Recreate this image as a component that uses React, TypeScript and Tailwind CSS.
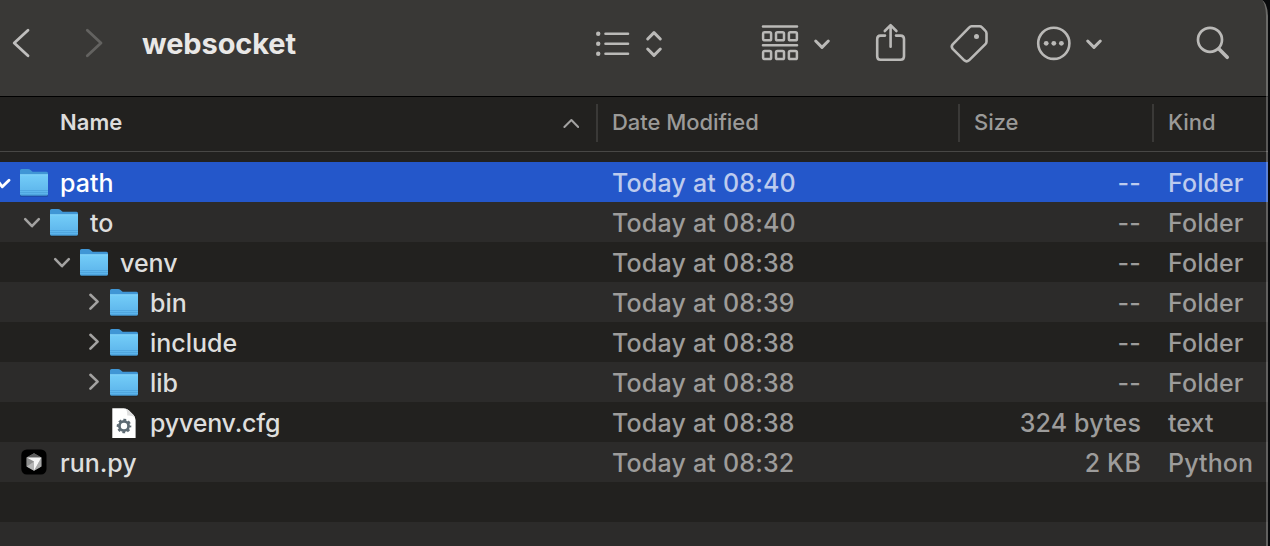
import React from "react";

type Row = { name: string; level: number; icon: "folder" | "cfg" | "py"; toggle?: "open" | "closed" | "check"; date: string; size: string; kind: string };

const rows: Row[] = [
  { name: "path", level: 0, icon: "folder", toggle: "check", date: "Today at 08:40", size: "--", kind: "Folder" },
  { name: "to", level: 1, icon: "folder", toggle: "open", date: "Today at 08:40", size: "--", kind: "Folder" },
  { name: "venv", level: 2, icon: "folder", toggle: "open", date: "Today at 08:38", size: "--", kind: "Folder" },
  { name: "bin", level: 3, icon: "folder", toggle: "closed", date: "Today at 08:39", size: "--", kind: "Folder" },
  { name: "include", level: 3, icon: "folder", toggle: "closed", date: "Today at 08:38", size: "--", kind: "Folder" },
  { name: "lib", level: 3, icon: "folder", toggle: "closed", date: "Today at 08:38", size: "--", kind: "Folder" },
  { name: "pyvenv.cfg", level: 3, icon: "cfg", date: "Today at 08:38", size: "324 bytes", kind: "text" },
  { name: "run.py", level: 0, icon: "py", date: "Today at 08:32", size: "2 KB", kind: "Python" },
];

const indents = ["w-0", "w-[30px]", "w-[60px]", "w-[90px]"];

function Toolbar() {
  return (
    <header className="flex h-24 shrink-0 items-start bg-[#393836]">
      <svg className="h-24 w-[120px] shrink-0" viewBox="0 0 120 96" fill="none" strokeWidth="2.8" strokeLinecap="round" strokeLinejoin="round">
        <path d="M28 30.2 14.2 43 28 55.8" stroke="#bfbebd" />
        <path d="M87.3 30.2 101 43 87.3 55.8" stroke="#636260" />
      </svg>
      <h1 className="w-[460px] shrink-0 pt-[24px] pl-[22px] text-[29px] leading-10 font-bold tracking-[-0.1px] text-[#e9e8e7]">websocket</h1>
      <svg className="h-24 w-[690px] shrink-0" viewBox="580 0 690 96" fill="none" stroke="#bab9b7" strokeWidth="2.6" strokeLinecap="round" strokeLinejoin="round">
        <path d="M605.5 33.8H628M605.5 43.8H628M605.5 53.8H628" strokeWidth="2.6" />
        <g fill="#bab9b7" stroke="none">
          <circle cx="598.2" cy="33.8" r="2.2" /><circle cx="598.2" cy="43.8" r="2.2" /><circle cx="598.2" cy="53.8" r="2.2" />
          <circle cx="976.5" cy="36.6" r="2.5" />
          <circle cx="1046.2" cy="43.3" r="2.4" /><circle cx="1053.8" cy="43.3" r="2.4" /><circle cx="1061.4" cy="43.3" r="2.4" />
        </g>
        <path d="M647.7 39 654 32.6 660.3 39M647.7 49 654 55.4 660.3 49" strokeWidth="3" />
        <path d="M763 26.5H797M763 45.3H797" strokeWidth="2.6" />
        <g strokeWidth="2.5">
          <rect x="763.1" y="32.3" width="8" height="8" rx="1.4" /><rect x="776" y="32.3" width="8" height="8" rx="1.4" /><rect x="788.9" y="32.3" width="8" height="8" rx="1.4" />
          <rect x="763.1" y="51.1" width="8" height="8" rx="1.4" /><rect x="776" y="51.1" width="8" height="8" rx="1.4" /><rect x="788.9" y="51.1" width="8" height="8" rx="1.4" />
        </g>
        <path d="M815.7 41 822 47.4 828.3 41" strokeWidth="3" />
        <path d="M885 35.6H880.5Q877.2 35.6 877.2 39V56.2Q877.2 59.8 880.5 59.8H900.5Q904 59.8 904 56.2V39Q904 35.6 900.5 35.6H896M890.6 46.8V25.6M884.8 31 890.6 25.2 896.4 31" strokeWidth="2.6" />
        <path d="M971.5 26.3H979.5Q981 26.3 982 27.3L985.2 30.6Q986.5 31.8 986.5 33.4V41.5Q986.5 43 985.4 44.1L969 60.3Q966.6 62.3 964.3 60.3L952.7 48.8Q950.8 46.5 952.7 44.3L969.3 27.4Q970.3 26.3 971.5 26.3Z" strokeWidth="2.6" />
        <circle cx="1053.8" cy="43.3" r="15.6" />
        <path d="M1087.7 41 1094 47.4 1100.3 41" strokeWidth="3" />
        <circle cx="1210" cy="39.8" r="12" strokeWidth="2.7" />
        <path d="M1219 49 1227.2 57.2" strokeWidth="3.7" />
      </svg>
    </header>
  );
}

function Toggle({ kind }: { kind?: Row["toggle"] }) {
  return (
    <svg className="h-10 w-[19px] shrink-0 overflow-visible" viewBox="0 0 19 40" fill="none" stroke="#a3a2a1" strokeWidth="2.6" strokeLinecap="round" strokeLinejoin="round">
      {kind === "check" && <path d="M-3 18 2.3 24.8 9 18.3" stroke="#fff" strokeWidth="2.8" />}
      {kind === "open" && <path d="M-4.8 17.2 2 24.2 8.8 17.2" />}
      {kind === "closed" && <path d="M0.4 12.8 7.6 19.6 0.4 26.6" />}
    </svg>
  );
}

function FileIcon({ kind }: { kind: Row["icon"] }) {
  return (
    <svg className="h-10 w-[30px] shrink-0" viewBox="0 0 30 40">
      {kind === "folder" && (
        <>
          <defs>
            <linearGradient id="front" x1="0" y1="0" x2="0" y2="1">
              <stop offset="0" stopColor="#74cdf8" />
              <stop offset="1" stopColor="#5ab2ea" />
            </linearGradient>
          </defs>
          <rect x="1" y="33" width="28" height="1.6" rx="0.8" fill="#000" opacity="0.3" />
          <path d="M1 8.5Q1 7 2.5 7H9Q10.5 7 11.5 8L13 9.3Q13.6 9.8 14.6 9.8H27.5Q29 9.8 29 11.3V31H1Z" fill="#4096d5" />
          <path d="M1 12.5H29V32Q29 33.4 27.6 33.4H2.4Q1 33.4 1 32Z" fill="url(#front)" />
          <path d="M1 12.8H29" stroke="#8ad8fb" strokeWidth="0.8" />
          <path d="M1 28.5H29M1 30.5H29" stroke="#4b9fda" strokeWidth="0.7" />
          <path d="M1.4 33H28.6" stroke="#3f94d0" strokeWidth="0.9" />
        </>
      )}
      {kind === "cfg" && (
        <>
          <path d="M3.3 6.3H15Q18 6.6 20 8.6L24.5 13Q26.6 15.2 26.6 18V36H3.3Z" fill="#fff" />
          <path d="M16 6.5Q18.6 8 18.2 13.5Q23.8 13.2 26 15.6Q25.4 14 24.5 13L20 8.6Q18.2 6.9 16 6.5Z" fill="#dedede" />
          <g transform="translate(15 24)" fill="none" stroke="#5d6a73">
            <circle r="4.6" strokeWidth="2.8" />
            <circle r="6.3" strokeWidth="2" strokeDasharray="2.8 2.148" strokeDashoffset="1.4" />
          </g>
        </>
      )}
      {kind === "py" && (
        <>
          <rect x="2.3" y="7.4" width="25.2" height="25.2" rx="5.5" fill="#000" />
          <path d="M15 11.2 22.4 15.4V24.4L15 28.8 7.6 24.4V15.4Z" fill="#777" />
          <path d="M15 11.2 22.4 15.4H7.6Z" fill="#5c5c5c" />
          <path d="M7.6 15.4 15 19.6 7.6 24.4Z" fill="#8e8e8e" />
          <path d="M7.6 24.4 15 19.6V28.8Z" fill="#b5b5b5" />
          <path d="M22.4 24.4V15.4L15 28.8Z" fill="#a8a8a8" />
          <path d="M7.6 15.4H22.4L15 28.8V19.6Z" fill="#f4f4f4" />
        </>
      )}
    </svg>
  );
}

export default function App() {
  return (
    <main className="h-[546px] w-[1270px] overflow-hidden bg-[#08090b] font-['Inter',sans-serif]">
      <div className="relative flex h-full w-[1268px] flex-col overflow-hidden rounded-tr-[7px_16px] bg-[#22211f]">
        <Toolbar />
        <div className="flex h-14 shrink-0 items-start border-t border-b border-t-black border-b-[#484745] pt-[7px] text-[22px] leading-9 font-medium tracking-[-0.05px] text-[#9b9a98]">
          <div className="flex h-[38px] w-[598px] shrink-0 items-start justify-between border-r-2 border-[#3a3937] pr-[17px] pl-[60px]">
            <span className="font-semibold tracking-[0.05px] text-[#dddcdb]">Name</span>
            <svg className="h-[38px] w-4" viewBox="0 0 16 38" fill="none" stroke="#a3a2a1" strokeWidth="2" strokeLinecap="round" strokeLinejoin="round"><path d="M1.4 23 8.4 16 15.2 23" /></svg>
          </div>
          <div className="flex h-[38px] w-[362px] shrink-0 items-start border-r-2 border-[#3a3937] pl-[14px]"><span>Date Modified</span></div>
          <div className="flex h-[38px] w-[194px] shrink-0 items-start border-r-2 border-[#3a3937] pl-[14px]"><span>Size</span></div>
          <div className="pl-[14px]"><span>Kind</span></div>
        </div>
        <div className="flex shrink-0 flex-col pt-[10px] text-[25px] leading-10 font-medium">
          {rows.map((row, i) => (
            <div key={row.name} className={`flex h-10 items-center ${i === 0 ? "bg-[#2457ca] text-[#bdcbee]" : i % 2 ? "bg-[#2c2b2a] text-[#9d9c9b]" : "text-[#9d9c9b]"}`}>
              <div className="flex w-[612px] shrink-0 items-center">
                <span className={indents[row.level]} />
                <Toggle kind={row.toggle} />
                <FileIcon kind={row.icon} />
                <span className={`pt-0.5 pl-[11px] ${row.icon === "cfg" ? "tracking-[-0.2px]" : ""} ${i === 0 ? "text-white" : "text-[#dededd]"}`}>{row.name}</span>
              </div>
              <span className="w-[300px] shrink-0 pt-0.5 tracking-[0.2px]">{row.date}</span>
              <span className="w-[229px] shrink-0 pt-0.5 text-right tracking-[0.15px]">{row.size}</span>
              <span className="pt-0.5 pl-[27px] tracking-[0.1px]">{row.kind}</span>
            </div>
          ))}
          <div className="h-10" />
          <div className="h-10 bg-[#2c2b2a]" />
        </div>
        <div className="pointer-events-none absolute inset-0 rounded-tr-[7px_16px] border-r-2 border-white/25" />
      </div>
    </main>
  );
}
